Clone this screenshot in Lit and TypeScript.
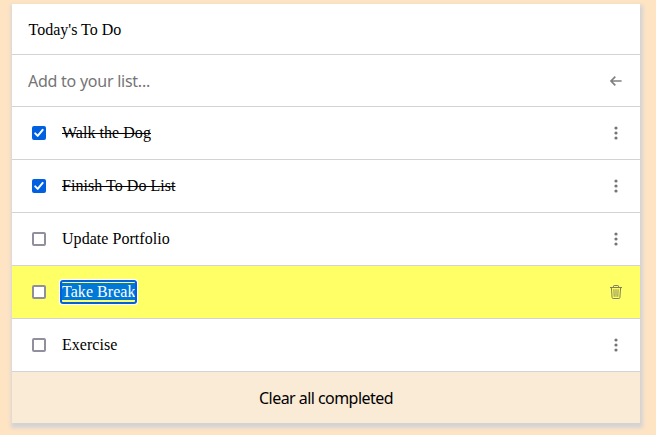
import { LitElement, html, css, svg } from "lit";
import { customElement, state } from "lit/decorators.js";
import { classMap } from "lit/directives/class-map.js";

interface Todo {
  text: string;
  done?: boolean;
  editing?: boolean;
}

const arrow = svg`<svg class="icon" viewBox="0 0 14 14"><path d="M12.6 7H2.4M6.3 2.6L2 7l4.3 4.4" fill="none" stroke="#808080" stroke-width="1.7"/></svg>`;
const dots = svg`<svg class="icon" viewBox="0 0 14 14"><g fill="#757575"><circle cx="7" cy="2" r="1.6"/><circle cx="7" cy="7" r="1.6"/><circle cx="7" cy="12" r="1.6"/></g></svg>`;
const trash = svg`<svg class="icon" viewBox="0 0 14 14"><g fill="none" stroke="#80805a"><path d="M1 2.5h12" stroke-width="1.1"/><path d="M4.5 2.3V1.2q0-.7.7-.7h3.6q.7 0 .7.7v1.1M2.4 2.8l.7 9.8q.1.9 1 .9h5.8q.9 0 1-.9l.7-9.8" stroke-width="1"/><path d="M4.9 4.2l.3 7.6M7 4.2v7.6M9.1 4.2l-.3 7.6" stroke-width="1" stroke="#8c8c5c"/></g></svg>`;
const tick = svg`<svg class="tick" viewBox="0 0 14 14"><path d="M3.2 7.4l2.5 2.5 5-6" fill="none" stroke="#fff" stroke-width="2" stroke-linecap="round" stroke-linejoin="round"/></svg>`;

@customElement("app-root")
export class AppRoot extends LitElement {
  @state() private todos: Todo[] = [
    { text: "Walk the Dog", done: true },
    { text: "Finish To Do List", done: true },
    { text: "Update Portfolio" },
    { text: "Take Break", editing: true },
    { text: "Exercise" },
  ];

  static styles = css`
    :host {
      display: block;
      box-sizing: border-box;
      height: 435px;
      padding: 4px 16px 0 12px;
      overflow: hidden;
      background: #ffe4c4;
      font: 16px/20px "Liberation Serif", "Times New Roman", serif;
      color: #000;
    }
    .card {
      background: #fff;
      box-shadow: 1px 3px 4px 2px #d3d3d3;
    }
    .row {
      display: flex;
      align-items: center;
      box-sizing: border-box;
      height: 53px;
      padding: 0 17px 0 16px;
      border-bottom: 1px solid #d3d3d3;
    }
    .title { height: 51px; padding-top: 2px; text-indent: 0.5px; }
    .add { height: 52px; }
    .prompt, .clear { font-family: "Noto Sans", sans-serif; }
    .prompt { color: #757575; letter-spacing: -0.25px; }
    .icon {
      display: block;
      width: 14px;
      height: 14px;
      margin-left: auto;
    }
    .item { padding-left: 20px; }
    .selected { background: #ffff66; }
    .box {
      box-sizing: border-box;
      width: 14px;
      height: 14px;
      margin-right: 16px;
      border: 2px solid #8f8f9d;
      border-radius: 2px;
      background: #fff;
    }
    .checked { border: 0; background: #0060df; }
    .tick { display: block; width: 14px; height: 14px; }
    .label { letter-spacing: 0.04px; }
    .done { text-decoration: line-through; }
    .editing {
      padding: 1px 0 2px;
      line-height: 17px;
      border-radius: 1px;
      outline: 2px solid #0060df;
      box-shadow: 0 0 0 3px #fff;
      color: #fff;
      background: linear-gradient(#0078d7, #0078d7) content-box, #ffff66;
    }
    .clear {
      display: flex;
      align-items: center;
      justify-content: center;
      width: 100%;
      height: 51px;
      padding: 0;
      border: 0;
      background: #faebd7;
      font-size: 16px;
      letter-spacing: -0.55px;
      color: #000;
    }
  `;

  render() {
    return html`
      <div class="card">
        <div class="row title">Today's To Do</div>
        <div class="row add"><span class="prompt">Add to your list...</span>${arrow}</div>
        ${this.todos.map(
          (t) => html`
            <div class=${classMap({ row: true, item: true, selected: !!t.editing })}>
              <span class=${classMap({ box: true, checked: !!t.done })}>${t.done ? tick : ""}</span>
              <span class=${classMap({ label: true, done: !!t.done, editing: !!t.editing })}>${t.text}</span>
              ${t.editing ? trash : dots}
            </div>
          `
        )}
        <button class="clear">Clear all completed</button>
      </div>
    `;
  }
}
